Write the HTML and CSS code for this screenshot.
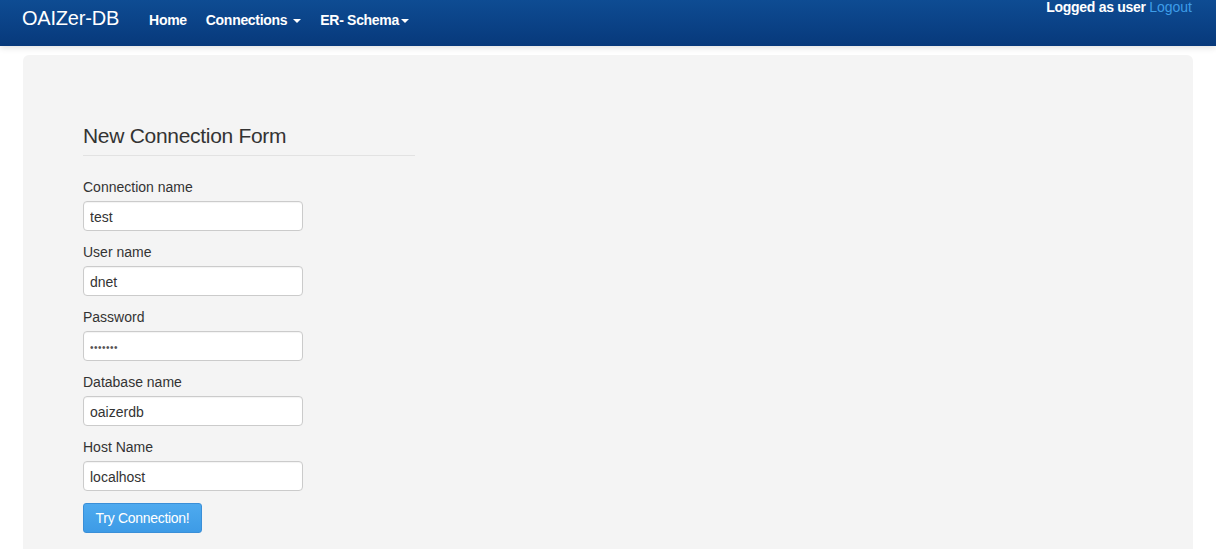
FILE: index.html
```html
<!DOCTYPE html>
<html>
<head>
<meta charset="utf-8">
<link rel="stylesheet" href="styles.css">
</head>
<body>
<header class="navbar">
  <a class="brand">OAIZer-DB</a>
  <nav class="nav">
    <a class="nav-item">Home</a>
    <a class="nav-item">Connections <span class="caret"></span></a>
    <a class="nav-item">ER- Schema<span class="caret"></span></a>
  </nav>
  <div class="user">Logged as user <a class="logout">Logout</a></div>
</header>
<main class="jumbotron">
  <form class="form">
    <h1 class="legend">New Connection Form</h1>
    <div class="group">
      <label class="label">Connection name</label>
      <input class="input" type="text" value="test">
    </div>
    <div class="group">
      <label class="label">User name</label>
      <input class="input" type="text" value="dnet">
    </div>
    <div class="group">
      <label class="label">Password</label>
      <input class="input pw" type="password" value="dnetdne">
    </div>
    <div class="group">
      <label class="label">Database name</label>
      <input class="input" type="text" value="oaizerdb">
    </div>
    <div class="group">
      <label class="label">Host Name</label>
      <input class="input" type="text" value="localhost">
    </div>
    <button class="btn" type="button">Try Connection!</button>
  </form>
</main>
</body>
</html>
```
FILE: styles.css
```css
* { box-sizing: border-box; }
html, body { margin: 0; padding: 0; }
body {
  font-family: "Liberation Sans", Arial, sans-serif;
  font-size: 14px;
  color: #333;
  background: #fff;
  height: 549px;
  overflow: hidden;
}
.navbar {
  height: 46px;
  background: linear-gradient(to bottom, #0e4c93 0%, #07397b 100%);
  display: flex;
  align-items: flex-start;
  padding: 0 24px 0 22px;
  box-shadow: 0 2px 6px rgba(0,0,0,0.12);
  position: relative;
}
.brand {
  color: #fff;
  font-size: 20px;
  line-height: 20px;
  padding-top: 8px;
  letter-spacing: -0.2px;
}
.nav {
  display: flex;
  margin-left: 30px;
  padding-top: 12px;
}
.nav-item {
  color: #fff;
  font-weight: bold;
  font-size: 14px;
  line-height: 17px;
  margin-right: 19px;
  letter-spacing: -0.3px;
  display: flex;
  align-items: center;
}
.caret {
  display: inline-block;
  width: 0;
  height: 0;
  border-left: 4px solid transparent;
  border-right: 4px solid transparent;
  border-top: 4px solid #fff;
  margin-left: 4px;
}
.nav-item:first-child + .nav-item .caret { margin-left: 6px; }
.nav-item:last-child .caret { margin-left: 2px; }
.user {
  margin-left: auto;
  color: #fff;
  font-weight: bold;
  font-size: 14px;
  line-height: 14px;
  letter-spacing: -0.3px;
}
.logout {
  color: #3d9de8;
  font-weight: normal;
  letter-spacing: 0;
}
.jumbotron {
  margin: 9px 23px 0;
  background: #f4f4f4;
  border-radius: 6px 6px 0 0;
  height: 494px;
  padding: 0 60px;
}
.form {
  width: 332px;
  padding-top: 69px;
}
.legend {
  margin: 0 0 21px;
  font-size: 21px;
  line-height: 24px;
  font-weight: normal;
  color: #333;
  padding-bottom: 7px;
  border-bottom: 1px solid #e2e2e2;
  letter-spacing: -0.3px;
}
.group {
  display: flex;
  flex-direction: column;
  margin-bottom: 11px;
}
.label {
  line-height: 20px;
  margin-bottom: 4px;
  color: #333;
}
.input {
  width: 220px;
  height: 30px;
  border: 1px solid #cbcbcb;
  border-radius: 4px;
  background: #fff;
  padding: 2px 6px 0;
  font-family: "Liberation Sans", Arial, sans-serif;
  font-size: 14px;
  color: #333;
  box-shadow: inset 0 1px 1px rgba(0,0,0,0.05);
}
.pw {
  font-size: 10px;
  color: #555;
  letter-spacing: 0.5px;
}
.btn {
  margin-top: 1px;
  width: 119px;
  height: 30px;
  background: linear-gradient(to bottom, #4eaaef, #3d9be6);
  border: 1px solid #3a8fd8;
  border-radius: 3px;
  color: #fff;
  font-family: "Liberation Sans", Arial, sans-serif;
  font-size: 14px;
  padding: 0;
  letter-spacing: -0.3px;
}
```
